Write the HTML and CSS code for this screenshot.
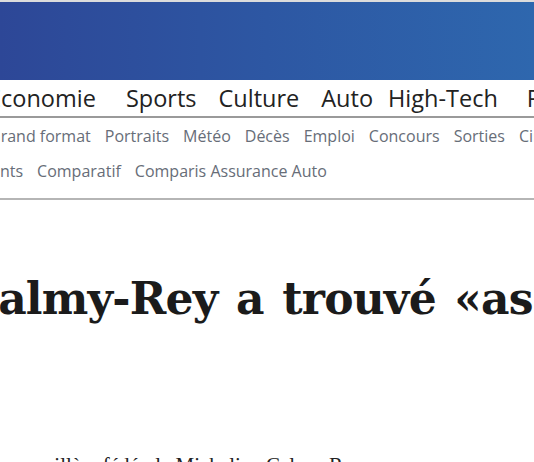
FILE: index.html
```html
<!DOCTYPE html>
<html lang="fr">
<head>
    <meta charset="UTF-8">
    <meta name="viewport" content="width=device-width, initial-scale=1.0">
    <title>Micheline Calmy-Rey</title>
    <link rel="stylesheet" href="styles.css">
</head>
<body>
    <header class="masthead"></header>

    <nav class="main-nav">
        <a href="#">Économie</a>
        <a href="#">Sports</a>
        <a href="#">Culture</a>
        <a href="#">Auto</a>
        <a href="#">High-Tech</a>
        <a href="#">People</a>
    </nav>

    <nav class="sub-nav">
        <div class="sub-row first">
            <a href="#">Grand format</a>
            <a href="#">Portraits</a>
            <a href="#">Météo</a>
            <a href="#">Décès</a>
            <a href="#">Emploi</a>
            <a href="#">Concours</a>
            <a href="#">Sorties</a>
            <a href="#">Cinéma</a>
        </div>
        <div class="sub-row second">
            <a href="#">Abonnements</a>
            <a href="#">Comparatif</a>
            <a href="#">Comparis Assurance Auto</a>
        </div>
    </nav>

    <article class="story">
        <h1>Micheline Calmy-Rey a trouvé «assez</h1>
        <p class="lead">L'ancienne conseillère fédérale Micheline Calmy-Rey</p>
    </article>
</body>
</html>
```

FILE: styles.css
```css
body {
    margin: 0;
    overflow: hidden;
    background: #fff;
    font-family: "Open Sans", Arial, sans-serif;
}
a {
    text-decoration: none;
}
.masthead {
    height: 78px;
    border-top: 2px solid #dcdcdc;
    background: linear-gradient(90deg, #2d4797 0%, #2d57a3 50%, #2e67ae 100%);
}

.main-nav {
    display: flex;
    height: 36px;
    align-items: center;
    margin-left: -12px;
    border-bottom: 2px solid #9a9a9a;
    white-space: nowrap;
}
.main-nav a {
    color: #222;
    font-size: 23.5px;
    flex-shrink: 0;
}
.main-nav a:nth-child(2) { margin-left: 30px; }
.main-nav a:nth-child(3) { margin-left: 22px; }
.main-nav a:nth-child(4) { margin-left: 22px; }
.main-nav a:nth-child(5) { margin-left: 15px; }
.main-nav a:nth-child(6) { margin-left: 29px; }

.sub-nav {
    padding-bottom: 10px;
    border-bottom: 2px solid #b5b5b5;
}
.sub-row {
    display: flex;
    gap: 14px;
    height: 35px;
    align-items: center;
    white-space: nowrap;
}
.sub-row a {
    color: #676d78;
    font-size: 16px;
    flex-shrink: 0;
}
.sub-row.first { margin-left: -11px; }
.sub-row.second { margin-left: -82px; }

.story h1 {
    margin: 73px 0 0 -293px;
    font-family: "DejaVu Serif", "Liberation Serif", serif;
    font-size: 44px;
    font-weight: bold;
    letter-spacing: -0.8px;
    word-spacing: 4px;
    color: #1b1b1b;
    white-space: nowrap;
}
.lead {
    margin: 129px 0 0 -90px;
    font-family: "Liberation Serif", "Times New Roman", serif;
    font-size: 21px;
    color: #222;
    white-space: nowrap;
}
```
